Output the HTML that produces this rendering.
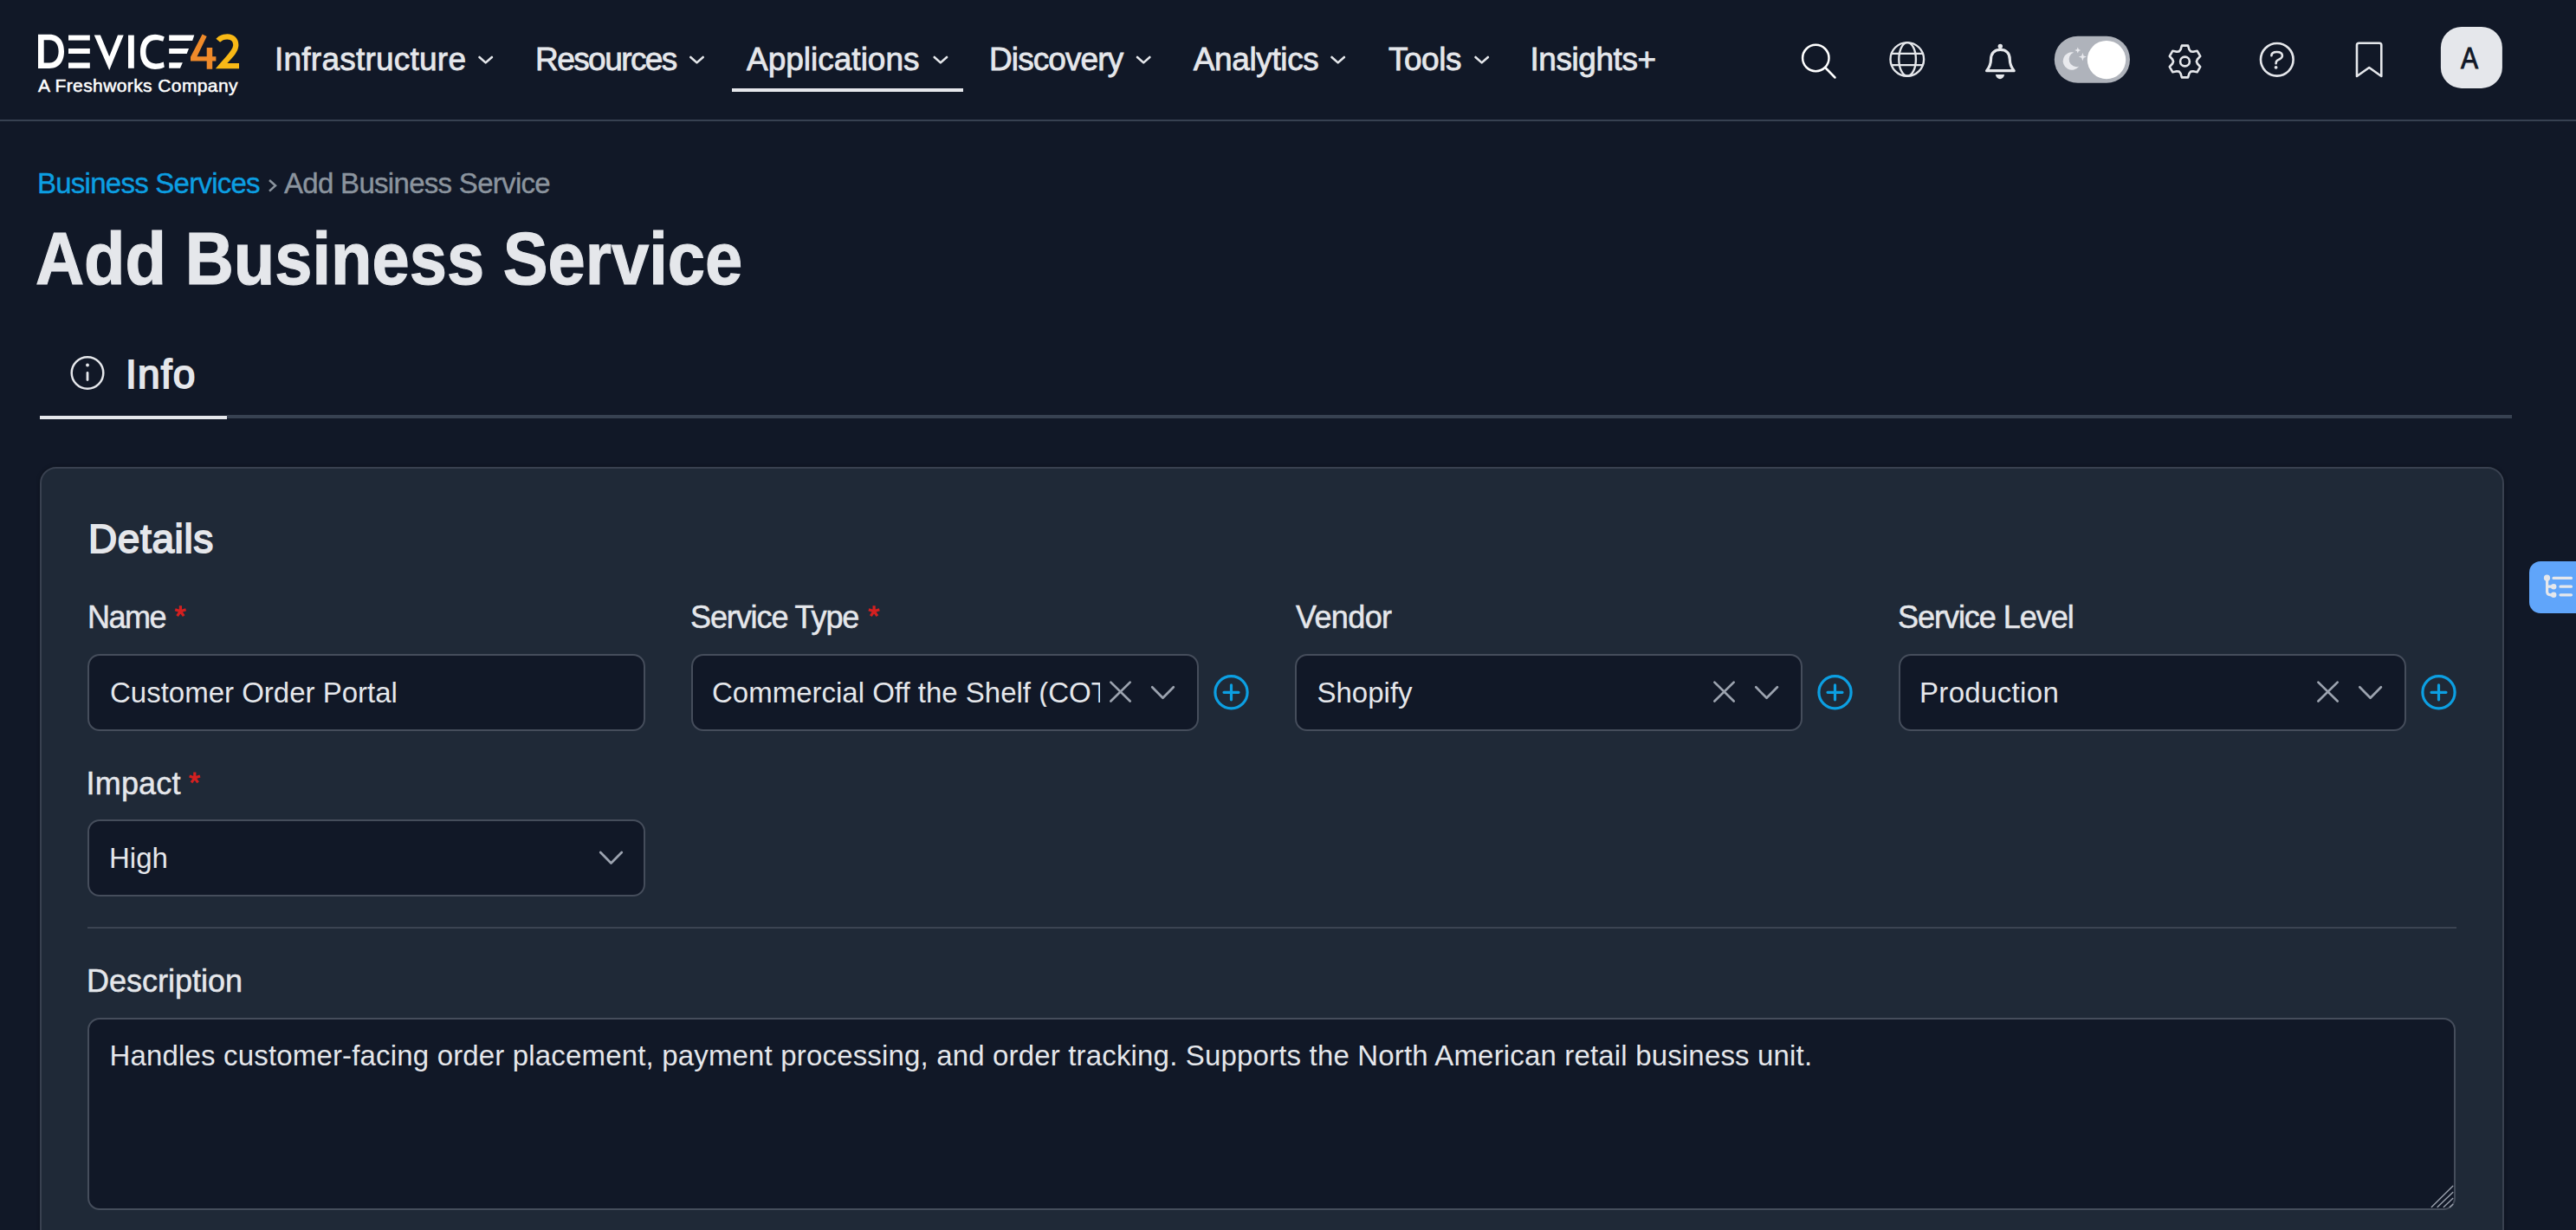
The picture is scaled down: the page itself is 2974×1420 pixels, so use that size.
<!DOCTYPE html>
<html><head><meta charset="utf-8">
<style>
html,body{margin:0;padding:0;width:2974px;height:1420px;overflow:hidden;background:#111827;font-family:"Liberation Sans",sans-serif;color:#e5e7eb}
.a{position:absolute;white-space:pre;line-height:1}
svg{position:absolute;overflow:visible}
.nav{font-size:37px;color:#e5e7eb;-webkit-text-stroke:0.8px #e5e7eb}
.lbl{font-size:36px;color:#e5e7eb;-webkit-text-stroke:0.5px #e5e7eb}
.req{color:#dc2626}
.box{position:absolute;box-sizing:border-box;background:#111827;border:2px solid #454d5b;border-radius:14px}
.val{font-size:33px;color:#e5e7eb}
</style></head><body>

<!-- HEADER -->
<div style="position:absolute;left:0;top:138px;width:2974px;height:2px;background:#374151"></div>

<!-- logo -->
<svg style="left:0;top:0" width="300" height="120" viewBox="0 0 300 120">
  <g fill="#ffffff">
    <path d="M44 39.7 H57 C70 39.7 74 50 74 59.3 C74 69 70 79 57 79 H44 Z M50.7 46.2 V72.5 H57 C64 72.5 67.6 67 67.6 59.3 C67.6 51.5 64 46.2 57 46.2 Z" fill-rule="evenodd"/>
    <rect x="79" y="40.6" width="24.8" height="6"/>
    <rect x="79" y="56" width="24.8" height="6"/>
    <rect x="79" y="72.4" width="24.8" height="6.4"/>
    <path d="M108.7 40.6 H115.9 L126.2 65.3 L136 40.6 H142.7 L126.2 80.9 Z"/>
    <rect x="148" y="40.6" width="6.8" height="38.2"/>
    <path d="M189.8 42.5 C186 40.5 182 39.7 179 39.7 C167 39.7 161.9 49 161.9 59.8 C161.9 71 167 80 179 80 C182.5 80 186 79.3 189.8 77.5 L188.8 71.5 C186 72.8 183 73.4 180 73.4 C172 73.4 168.4 67.5 168.4 59.8 C168.4 52 172 46.2 180 46.2 C183 46.2 186 46.8 188.2 47.8 Z"/>
    <path d="M195.2 40.6 H224.3 L222.2 47 H195.2 Z"/>
    <path d="M195.2 56 H218 L215.7 62 H195.2 Z"/>
    <path d="M195.2 72.3 H210.8 L208 78.8 H195.2 Z"/>
  </g>
  <path d="M233.6 39.4 L238.7 42 L227.5 65.3 H238.7 V55 H245.2 V65.3 H249.4 V70.4 H245.2 V79.7 H238.7 V70.4 H220 V65.8 Z" fill="#ef8a2a"/>
  <path d="M251.8 46.8 C254.5 43.5 258.5 42.3 262.5 42.3 C268.5 42.3 272.3 46.2 272.3 52 C272.3 59.5 264 66 255.5 76.2 H276" fill="none" stroke="#f9b916" stroke-width="6.2" stroke-linejoin="miter"/>
</svg>
<div class="a" style="left:44px;top:88px;font-size:21px;color:#fff;letter-spacing:0.4px;-webkit-text-stroke:0.5px #fff">A Freshworks Company</div>

<!-- nav -->
<div class="a nav" style="left:317px;top:49.9px;letter-spacing:0.23px">Infrastructure</div>
<div class="a nav" style="left:618px;top:49.9px;letter-spacing:-1.56px">Resources</div>
<div class="a nav" style="left:862px;top:49.9px">Applications</div>
<div class="a nav" style="left:1142px;top:49.9px;letter-spacing:-0.9px">Discovery</div>
<div class="a nav" style="left:1377.7px;top:49.9px;letter-spacing:-0.37px">Analytics</div>
<div class="a nav" style="left:1603px;top:49.9px;letter-spacing:-0.5px">Tools</div>
<div class="a nav" style="left:1766.4px;top:49.9px;letter-spacing:-0.42px">Insights+</div>
<svg style="left:0;top:0" width="2974" height="120">
  <g fill="none" stroke="#e5e7eb" stroke-width="2.6" stroke-linecap="round" stroke-linejoin="round">
    <path d="M553.5 66 L560.7 72.4 L567.9 66"/>
    <path d="M797.3 66 L804.5 72.4 L811.7 66"/>
    <path d="M1078.7 66 L1085.9 72.4 L1093.1 66"/>
    <path d="M1313.0 66 L1320.2 72.4 L1327.4 66"/>
    <path d="M1537.5 66 L1544.7 72.4 L1551.9 66"/>
    <path d="M1703.5 66 L1710.7 72.4 L1717.9 66"/>
  </g>
</svg>
<div style="position:absolute;left:845px;top:102px;width:267px;height:4px;background:#e5e7eb"></div>

<!-- header icons -->
<svg style="left:0;top:0" width="2974" height="140">
  <g fill="none" stroke="#ffffff" stroke-width="2.5" stroke-linecap="round">
    <circle cx="2096.3" cy="67" r="15.2"/>
    <path d="M2107.2 78 L2118.5 89.5"/>
  </g>
  <g fill="none" stroke="#e5e7eb" stroke-width="2.4">
    <circle cx="2201.8" cy="68.4" r="19.3"/>
    <ellipse cx="2202.1" cy="68.4" rx="9.8" ry="19.3"/>
    <path d="M2184 61.9 H2220 M2184 75.1 H2220"/>
  </g>
  <g fill="none" stroke="#e5e7eb" stroke-width="3.2" stroke-linejoin="round">
    <path d="M2293.6 81.7 C2297 77.5 2298.5 74 2298.5 68.5 C2298.5 61.5 2302.5 57.3 2309.4 57.3 C2316.3 57.3 2320.3 61.5 2320.3 68.5 C2320.3 74 2321.8 77.5 2325.2 81.7 Z"/>
  </g>
  <circle cx="2309.3" cy="53.4" r="2.7" fill="#e5e7eb"/>
  <path d="M2303.9 86 H2314.1 C2313.6 89.3 2311.6 91.2 2309 91.2 C2306.4 91.2 2304.4 89.3 2303.9 86 Z" fill="#e5e7eb"/>
  <!-- toggle -->
  <rect x="2371.8" y="41.7" width="87.2" height="54.1" rx="27" fill="#afb3bb"/>
  <circle cx="2432" cy="69.1" r="22.2" fill="#ffffff"/>
  <path d="M2394.2 60.4 A10.3 10.3 0 1 0 2400.3 76.6 A8.2 8.2 0 0 1 2394.2 60.4 Z" fill="#e9eaee"/>
  <path d="M2398.8 54.5 L2399.8 57 L2402.3 58 L2399.8 59 L2398.8 61.5 L2397.8 59 L2395.3 58 L2397.8 57 Z" fill="#e9eaee"/>
  <path d="M2404.4 61 L2405.6 64.4 L2409 65.6 L2405.6 66.8 L2404.4 70.2 L2403.2 66.8 L2399.8 65.6 L2403.2 64.4 Z" fill="#e9eaee"/>
  <!-- gear -->
  <g fill="none" stroke="#e5e7eb" stroke-width="2.6" stroke-linejoin="round">
    <path d="M2517.5 57.3 L2518.9 52.6 L2526.1 52.6 L2527.5 57.3 L2529.2 59.4 L2531.9 59.8 L2536.6 58.7 L2540.2 64.9 L2536.9 68.5 L2535.9 71.0 L2536.9 73.5 L2540.2 77.1 L2536.6 83.3 L2531.9 82.2 L2529.2 82.6 L2527.5 84.7 L2526.1 89.4 L2518.9 89.4 L2517.5 84.7 L2515.8 82.6 L2513.1 82.2 L2508.4 83.3 L2504.8 77.1 L2508.1 73.5 L2509.1 71.0 L2508.1 68.5 L2504.8 64.9 L2508.4 58.7 L2513.1 59.8 L2515.8 59.4 Z"/>
    <circle cx="2522.5" cy="71" r="5.4"/>
  </g>
  <!-- help -->
  <g fill="none" stroke="#e5e7eb" stroke-width="2.6" stroke-linecap="round">
    <circle cx="2628.8" cy="68.8" r="18.8"/>
    <path d="M2622.4 64.2 C2622.4 61.5 2625 60 2628.6 60 C2632.5 60 2634.9 61.8 2634.9 64.6 C2634.9 67.4 2631.3 68.6 2629.3 69.6 C2628 70.3 2627.6 71.2 2627.6 73.2"/>
  </g>
  <circle cx="2627.6" cy="77.8" r="1.9" fill="#e5e7eb"/>
  <!-- bookmark -->
  <path d="M2721 88 V52 C2721 50.5 2722 49.8 2723.5 49.8 H2747 C2748.5 49.8 2749.3 50.5 2749.3 52 V88 L2735.2 78 Z" fill="none" stroke="#e5e7eb" stroke-width="2.6" stroke-linejoin="round"/>
  <!-- avatar -->
  <rect x="2817.9" y="30.9" width="71" height="71" rx="24" fill="#e5e7eb"/>
</svg>
<div class="a" style="left:2841px;top:49px;font-size:35px;color:#111827;transform-origin:0 0;transform:scaleX(0.86);-webkit-text-stroke:0.9px #111827">A</div>

<!-- breadcrumb -->
<div class="a" style="left:43px;top:195px;font-size:33px;color:#0c9fe2;letter-spacing:-0.75px;-webkit-text-stroke:0.4px #0c9fe2">Business Services</div>
<svg style="left:0;top:0" width="400" height="240"><path d="M311 208 L318 214.3 L311 220.6" fill="none" stroke="#8b949e" stroke-width="2.5"/></svg>
<div class="a" style="left:328px;top:195px;font-size:33px;color:#8b949e;letter-spacing:-0.7px;-webkit-text-stroke:0.4px #8b949e">Add Business Service</div>

<!-- title -->
<div class="a" style="left:41px;top:255px;font-size:86px;font-weight:bold;color:#e5e7eb;transform-origin:0 0;transform:scaleX(0.9036);-webkit-text-stroke:1.2px #e5e7eb">Add Business Service</div>

<!-- tab -->
<svg style="left:0;top:0" width="300" height="500">
  <circle cx="101" cy="430.5" r="18.3" fill="none" stroke="#e5e7eb" stroke-width="2.5"/>
  <rect x="99.6" y="429" width="2.8" height="11" rx="1.4" fill="#e5e7eb"/>
  <circle cx="101" cy="421.5" r="1.9" fill="#e5e7eb"/>
</svg>
<div class="a" style="left:145px;top:409px;font-size:46px;color:#e5e7eb;letter-spacing:1.2px;-webkit-text-stroke:1.8px #e5e7eb">Info</div>
<div style="position:absolute;left:262px;top:479px;width:2638px;height:4px;background:#374151"></div>
<div style="position:absolute;left:46px;top:480px;width:216px;height:4px;background:#e5e7eb"></div>

<!-- CARD -->
<div style="position:absolute;left:46px;top:539px;width:2845px;height:1000px;box-sizing:border-box;background:#1f2937;border:2px solid #394150;border-radius:19px;box-shadow:0 0 4px rgba(0,0,0,0.35)"></div>

<div class="a" style="left:102px;top:599px;font-size:46px;color:#e5e7eb;letter-spacing:0.6px;-webkit-text-stroke:1.8px #e5e7eb">Details</div>

<!-- labels row 1 -->
<div class="a lbl" style="left:101px;top:694.5px;letter-spacing:-1.5px">Name</div>
<div class="a lbl" style="left:797px;top:694.5px;letter-spacing:-1.1px">Service Type</div>
<div class="a lbl" style="left:1496px;top:694.5px;letter-spacing:-0.6px">Vendor</div>
<div class="a lbl" style="left:2191px;top:694.5px;letter-spacing:-1.03px">Service Level</div>

<!-- inputs row 1 -->
<div class="box" style="left:101px;top:755px;width:644px;height:89px"></div>
<div class="a val" style="left:127px;top:782.5px">Customer Order Portal</div>

<div class="box" style="left:798px;top:755px;width:586px;height:89px"></div>
<div class="a val" style="left:822px;top:782.5px;width:448px;overflow:hidden">Commercial Off the Shelf (COTS)</div>

<div class="box" style="left:1495px;top:755px;width:586px;height:89px"></div>
<div class="a val" style="left:1520.5px;top:782.5px">Shopify</div>

<div class="box" style="left:2192px;top:755px;width:586px;height:89px"></div>
<div class="a val" style="left:2216px;top:782.5px;letter-spacing:0.33px">Production</div>



<!-- impact -->
<div class="a lbl" style="left:99.5px;top:886.8px;letter-spacing:0.2px">Impact</div>
<div class="box" style="left:101px;top:946px;width:644px;height:89px"></div>
<div class="a val" style="left:126px;top:974px">High</div>

<!-- divider -->
<div style="position:absolute;left:101px;top:1070px;width:2735px;height:2px;background:#3b4452"></div>

<div class="a lbl" style="left:100px;top:1115.2px;letter-spacing:0px">Description</div>
<div class="box" style="left:101px;top:1175px;width:2734px;height:222px"></div>
<div class="a val" style="left:126.5px;top:1202.4px;letter-spacing:0.165px">Handles customer-facing order placement, payment processing, and order tracking. Supports the North American retail business unit.</div>

<svg style="left:0;top:0" width="2974" height="1100">
  <g fill="none" stroke="#9ca3af" stroke-width="2.7" stroke-linecap="round" stroke-linejoin="round">
    <path d="M1282.4 787.6 L1304.7 809.5 M1304.7 787.6 L1282.4 809.5"/>
    <path d="M1330.2 793.3 L1342.5 805.8 L1354.8 793.3"/>
    <path d="M1979.4 787.6 L2001.7 809.5 M2001.7 787.6 L1979.4 809.5"/>
    <path d="M2027.3 793.3 L2039.6 805.8 L2051.9 793.3"/>
    <path d="M2676.4 787.6 L2698.7 809.5 M2698.7 787.6 L2676.4 809.5"/>
    <path d="M2724.3 793.3 L2736.6 805.8 L2748.9 793.3"/>
    <path d="M693.2 984 L705.5 996.5 L717.8 984"/>
  </g>
  <g fill="none" stroke="#0c9fe2" stroke-width="3.2" stroke-linecap="round">
    <circle cx="1421.5" cy="799.3" r="18.6"/>
    <path d="M1421.5 790.8 V807.8 M1413 799.3 H1430"/>
    <circle cx="2118.5" cy="799.3" r="18.6"/>
    <path d="M2118.5 790.8 V807.8 M2110 799.3 H2127"/>
    <circle cx="2815.5" cy="799.3" r="18.6"/>
    <path d="M2815.5 790.8 V807.8 M2807 799.3 H2824"/>
  </g>
  <g fill="none" stroke="#d42020" stroke-width="3.2" stroke-linecap="butt">
    <path d="M208.4 705.8 L208.4 699.3 M208.4 705.8 L214.6 703.8 M208.4 705.8 L212.2 711.1 M208.4 705.8 L204.6 711.1 M208.4 705.8 L202.2 703.8 "/>
    <path d="M1009.1 705.8 L1009.1 699.3 M1009.1 705.8 L1015.3 703.8 M1009.1 705.8 L1012.9 711.1 M1009.1 705.8 L1005.3 711.1 M1009.1 705.8 L1002.9 703.8 "/>
    <path d="M224.8 898.1 L224.8 891.6 M224.8 898.1 L231.0 896.1 M224.8 898.1 L228.6 903.4 M224.8 898.1 L221.0 903.4 M224.8 898.1 L218.6 896.1 "/>
  </g>
  <!-- textarea resize handle -->
  <g stroke="#9ca3af" stroke-width="1.4" stroke-linecap="round">
    <path d="M2807.3 1393.5 L2831.8 1369.3 M2814.1 1393.5 L2831.8 1376.4 M2821.3 1393.5 L2831.8 1383.5 M2828.4 1393.5 L2831.8 1390.4"/>
  </g>
</svg>

<!-- floating button -->
<div style="position:absolute;left:2920px;top:648px;width:80px;height:60px;background:#60a5fa;border-radius:13px"></div>
<svg style="left:0;top:0" width="2974" height="1420">
  <g fill="#e5e7eb">
    <circle cx="2940.5" cy="667.2" r="3.6"/>
    <circle cx="2948.2" cy="677.2" r="3.2"/>
    <circle cx="2948.2" cy="686.8" r="3.2"/>
  </g>
  <g fill="none" stroke="#e5e7eb" stroke-width="3.2" stroke-linecap="round">
    <path d="M2940.6 668 V683 C2940.6 685.5 2942 686.8 2945 686.8 H2948"/>
    <path d="M2940.6 677.2 H2948"/>
    <path d="M2948 667.4 H2968.5 M2956 677.2 H2968.5 M2956 686.8 H2968.5"/>
  </g>
</svg>

</body></html>
